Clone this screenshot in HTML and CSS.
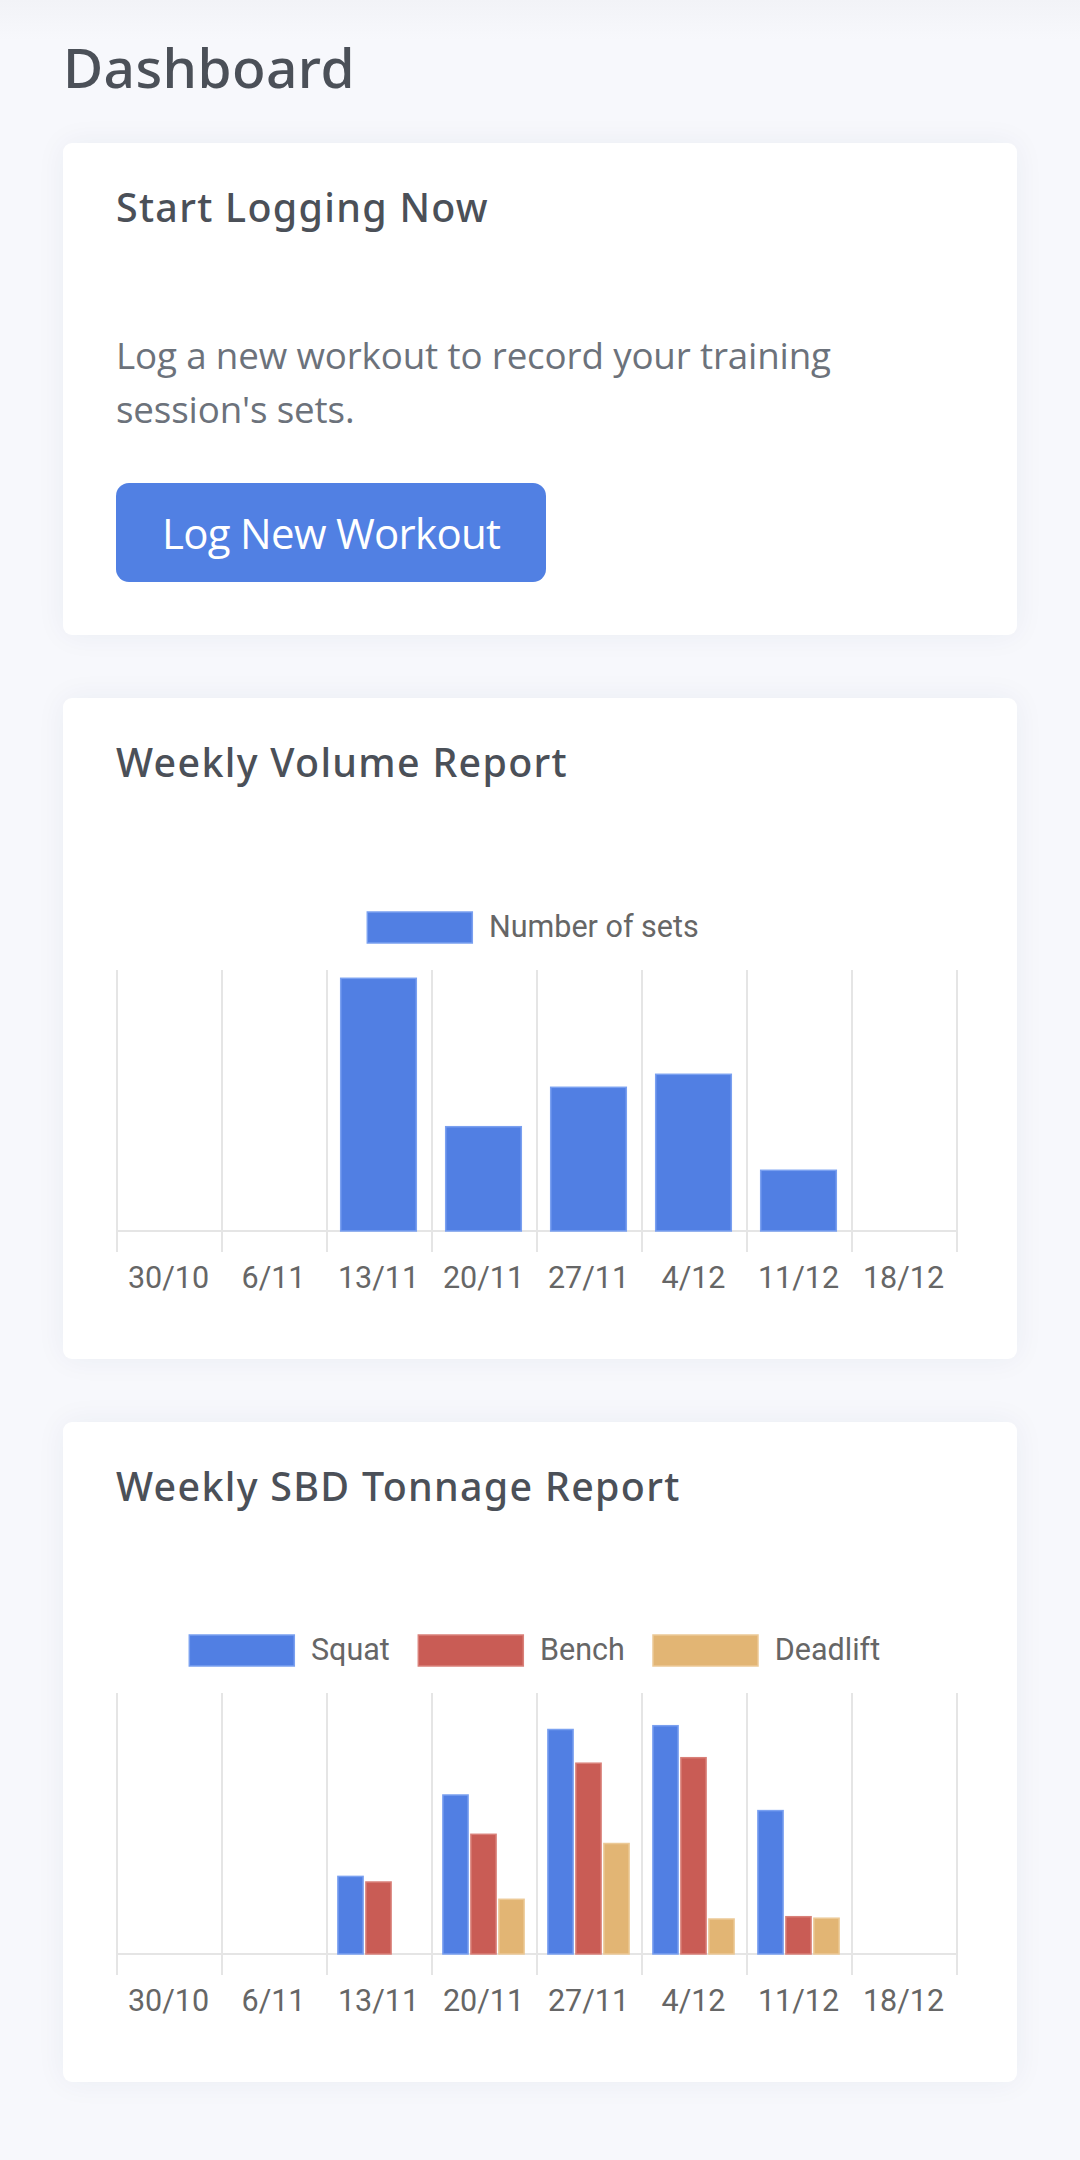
FILE: index.html
```html
<!DOCTYPE html>
<html lang="en">
<head>
<meta charset="utf-8">
<title>Dashboard</title>
<link rel="stylesheet" href="styles.css">
</head>
<body>
<main class="page">
  <h1 class="page-title">Dashboard</h1>

  <section class="card">
    <h2 class="card-title">Start Logging Now</h2>
    <p class="card-text">Log a new workout to record your training session's sets.</p>
    <a class="btn-primary" href="#">Log New Workout</a>
  </section>

  <section class="card">
    <h2 class="card-title">Weekly Volume Report</h2>
    <div class="chart">
      <svg class="chart-svg" width="849" height="416" viewBox="0 0 849 416">
        <g class="legend">
          <rect class="bar-blue" x="251.3" y="22" width="105" height="31"/>
          <text class="legend-text" x="373" y="46.5">Number of sets</text>
        </g>
        <g class="grid">
          <line x1="1" y1="80" x2="1" y2="362"/>
          <line x1="106" y1="80" x2="106" y2="362"/>
          <line x1="211" y1="80" x2="211" y2="362"/>
          <line x1="316" y1="80" x2="316" y2="362"/>
          <line x1="421" y1="80" x2="421" y2="362"/>
          <line x1="526" y1="80" x2="526" y2="362"/>
          <line x1="631" y1="80" x2="631" y2="362"/>
          <line x1="736" y1="80" x2="736" y2="362"/>
          <line x1="841" y1="80" x2="841" y2="362"/>
          <line x1="0" y1="341" x2="842" y2="341"/>
        </g>
        <g class="bars">
          <rect class="bar-blue" x="224.7" y="88.3" width="75.6" height="252.7"/>
          <rect class="bar-blue" x="329.7" y="236.7" width="75.6" height="104.3"/>
          <rect class="bar-blue" x="434.7" y="197.3" width="75.6" height="143.7"/>
          <rect class="bar-blue" x="539.7" y="184.3" width="75.6" height="156.7"/>
          <rect class="bar-blue" x="644.7" y="280.3" width="75.6" height="60.7"/>
        </g>
        <g class="axis-labels">
          <text x="52.5" y="397.5">30/10</text>
          <text x="157.5" y="397.5">6/11</text>
          <text x="262.5" y="397.5">13/11</text>
          <text x="367.5" y="397.5">20/11</text>
          <text x="472.5" y="397.5">27/11</text>
          <text x="577.5" y="397.5">4/12</text>
          <text x="682.5" y="397.5">11/12</text>
          <text x="787.5" y="397.5">18/12</text>
        </g>
      </svg>
    </div>
  </section>

  <section class="card">
    <h2 class="card-title">Weekly SBD Tonnage Report</h2>
    <div class="chart">
      <svg class="chart-svg" width="849" height="416" viewBox="0 0 849 416">
        <g class="legend">
          <rect class="bar-blue" x="73.3" y="22" width="105" height="31"/>
          <text class="legend-text" x="195" y="46.5">Squat</text>
          <rect class="bar-red" x="302.3" y="22" width="105" height="31"/>
          <text class="legend-text" x="424" y="46.5">Bench</text>
          <rect class="bar-tan" x="537" y="22" width="105" height="31"/>
          <text class="legend-text" x="658.8" y="46.5">Deadlift</text>
        </g>
        <g class="grid">
          <line x1="1" y1="80" x2="1" y2="362"/>
          <line x1="106" y1="80" x2="106" y2="362"/>
          <line x1="211" y1="80" x2="211" y2="362"/>
          <line x1="316" y1="80" x2="316" y2="362"/>
          <line x1="421" y1="80" x2="421" y2="362"/>
          <line x1="526" y1="80" x2="526" y2="362"/>
          <line x1="631" y1="80" x2="631" y2="362"/>
          <line x1="736" y1="80" x2="736" y2="362"/>
          <line x1="841" y1="80" x2="841" y2="362"/>
          <line x1="0" y1="341" x2="842" y2="341"/>
        </g>
        <g class="bars">
          <rect class="bar-blue" x="221.9" y="263.4" width="25.2" height="77.6"/>
          <rect class="bar-red" x="249.9" y="269" width="25.2" height="72"/>

          <rect class="bar-blue" x="326.9" y="182" width="25.2" height="159"/>
          <rect class="bar-red" x="354.9" y="221.3" width="25.2" height="119.7"/>
          <rect class="bar-tan" x="382.9" y="286.3" width="25.2" height="54.7"/>

          <rect class="bar-blue" x="431.9" y="116.5" width="25.2" height="224.5"/>
          <rect class="bar-red" x="459.9" y="150.2" width="25.2" height="190.8"/>
          <rect class="bar-tan" x="487.9" y="230.5" width="25.2" height="110.5"/>

          <rect class="bar-blue" x="536.9" y="112.7" width="25.2" height="228.3"/>
          <rect class="bar-red" x="564.9" y="144.7" width="25.2" height="196.3"/>
          <rect class="bar-tan" x="592.9" y="306" width="25.2" height="35"/>

          <rect class="bar-blue" x="641.9" y="197.6" width="25.2" height="143.4"/>
          <rect class="bar-red" x="669.9" y="303.7" width="25.2" height="37.3"/>
          <rect class="bar-tan" x="697.9" y="305.2" width="25.2" height="35.8"/>
        </g>
        <g class="axis-labels">
          <text x="52.5" y="397.5">30/10</text>
          <text x="157.5" y="397.5">6/11</text>
          <text x="262.5" y="397.5">13/11</text>
          <text x="367.5" y="397.5">20/11</text>
          <text x="472.5" y="397.5">27/11</text>
          <text x="577.5" y="397.5">4/12</text>
          <text x="682.5" y="397.5">11/12</text>
          <text x="787.5" y="397.5">18/12</text>
        </g>
      </svg>
    </div>
  </section>
</main>
</body>
</html>
```

FILE: styles.css
```css
html, body {
  margin: 0;
  padding: 0;
}

body {
  background: #f7f8fc;
  font-family: "Open Sans", "Noto Sans", sans-serif;
  min-height: 2160px;
}

.page {
  padding: 34px 63px 63px 63px;
  display: flex;
  flex-direction: column;
  gap: 63px;
  background: linear-gradient(#f2f3f7 0, #f7f8fc 40px);
}

.page-title {
  margin: 0 0 -20px 0;
  font-family: "Noto Sans", "Open Sans", sans-serif;
  font-size: 55px;
  line-height: 66px;
  font-weight: 500;
  color: #4b5058;
  letter-spacing: 0.4px;
}

.card {
  background: #ffffff;
  border-radius: 9px;
  box-shadow: 0 0 30px rgba(40, 50, 100, 0.06);
  padding: 41px 53px 53px 53px;
  display: flex;
  flex-direction: column;
  align-items: flex-start;
}

.card-title {
  margin: 0;
  font-family: "Noto Sans", "Open Sans", sans-serif;
  font-size: 39.4px;
  line-height: 47.3px;
  font-weight: 500;
  color: #4b5058;
  letter-spacing: 1.3px;
}

.card-text {
  margin: 97px 0 0 0;
  font-size: 36.75px;
  line-height: 54px;
  font-weight: 400;
  color: #6c727b;
  letter-spacing: -0.15px;
}

.btn-primary {
  margin-top: 47px;
  display: inline-block;
  background: #5180e3;
  color: #ffffff;
  text-decoration: none;
  font-size: 42px;
  line-height: 63px;
  font-weight: 400;
  padding: 18px 46px;
  border-radius: 13px;
  letter-spacing: -0.7px;
}

.chart {
  margin-top: 103px;
  width: 849px;
  height: 416px;
}

.chart-svg {
  display: block;
  overflow: visible;
}

.grid line {
  stroke: #e5e5e5;
  stroke-width: 2;
}

.bar-blue {
  fill: #517fe3;
  stroke: #7aa0f0;
  stroke-width: 1.5;
}

.bar-red {
  fill: #c95c55;
  stroke: #d98079;
  stroke-width: 1.5;
}

.bar-tan {
  fill: #e2b574;
  stroke: #ecc996;
  stroke-width: 1.5;
}

.legend-text,
.axis-labels text {
  font-family: Roboto, "Liberation Sans", sans-serif;
  font-size: 30.5px;
  fill: #666666;
}

.axis-labels text {
  text-anchor: middle;
}
```
